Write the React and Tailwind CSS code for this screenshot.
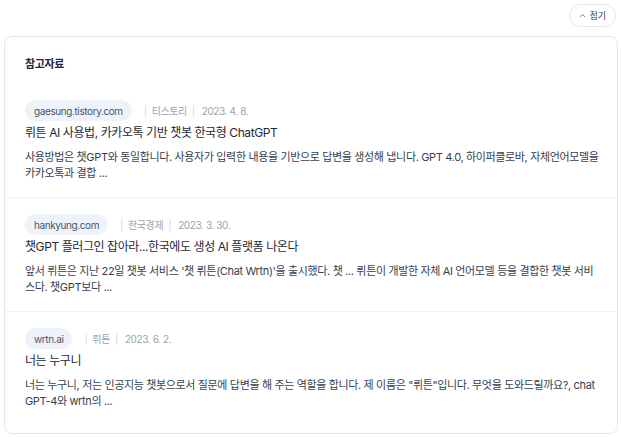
import React from 'react'

const sources = [
  {
    domain: 'gaesung.tistory.com',
    site: '티스토리',
    date: '2023. 4. 8.',
    title: '뤼튼 AI 사용법, 카카오톡 기반 챗봇 한국형 ChatGPT',
    desc: '사용방법은 챗GPT와 동일합니다. 사용자가 입력한 내용을 기반으로 답변을 생성해 냅니다. GPT 4.0, 하이퍼클로바, 자체언어모델을 카카오톡과 결합 ...',
  },
  {
    domain: 'hankyung.com',
    site: '한국경제',
    date: '2023. 3. 30.',
    title: '챗GPT 플러그인 잡아라...한국에도 생성 AI 플랫폼 나온다',
    desc: "앞서 뤼튼은 지난 22일 챗봇 서비스 '챗 뤼튼(Chat Wrtn)'을 출시했다. 챗 ... 뤼튼이 개발한 자체 AI 언어모델 등을 결합한 챗봇 서비스다. 챗GPT보다 ...",
  },
  {
    domain: 'wrtn.ai',
    site: '뤼튼',
    date: '2023. 6. 2.',
    title: '너는 누구니',
    desc: '너는 누구니, 저는 인공지능 챗봇으로서 질문에 답변을 해 주는 역할을 합니다. 제 이름은 "뤼튼"입니다. 무엇을 도와드릴까요?, chat GPT-4와 wrtn의 ...',
  },
]

const SourceItem = ({ item, last }) => (
  <div className={`px-5 pt-4 ${last ? 'pb-6' : 'pb-4 border-b border-[#eef2f9]'}`}>
    <div className="flex items-center text-[10px] leading-none tracking-[-0.04em]">
      <span className="h-[21px] px-[9px] flex items-center rounded-full bg-[#eef3fb] text-[#4b5563]">
        {item.domain}
      </span>
      <span className="ml-3 text-[#d1d5db]">|</span>
      <span className="ml-[5px] text-[#9ca3af]">{item.site}</span>
      <span className="ml-[5px] text-[#d1d5db]">|</span>
      <span className="ml-[7px] text-[#9ca3af]">{item.date}</span>
    </div>
    <div className="mt-[3px] text-[12px] leading-[18px] text-[#1f2937] tracking-[-0.035em]">{item.title}</div>
    <p className="mt-[7px] mr-[-5px] text-[11px] leading-[16px] text-[#374151] tracking-[-0.032em]">{item.desc}</p>
  </div>
)

export default function App() {
  return (
    <div
      className="w-[622px] h-[437px] bg-white px-1 pt-1"
      style={{ fontFamily: 'Inter, "Noto Sans CJK KR", sans-serif' }}
    >
      <div className="flex justify-end pr-[2px]">
        <button className="h-[23px] px-[9px] flex items-center gap-[3px] rounded-full border border-[#e3e8f2] text-[9px] text-[#374151] bg-white">
          <svg width="7" height="7" viewBox="0 0 10 10" fill="none" stroke="#6b7280" strokeWidth="1.4" strokeLinecap="round" strokeLinejoin="round">
            <path d="M2 6.5 L5 3.5 L8 6.5" />
          </svg>
          접기
        </button>
      </div>
      <div className="mt-[9px] border border-[#e1e6f1] rounded-lg">
        <div className="px-5 pt-[19px] pb-3 text-[11px] leading-4 font-semibold text-[#1f2937] tracking-[-0.03em]">참고자료</div>
        {sources.map((s, i) => (
          <SourceItem key={s.domain} item={s} last={i === sources.length - 1} />
        ))}
      </div>
    </div>
  )
}
